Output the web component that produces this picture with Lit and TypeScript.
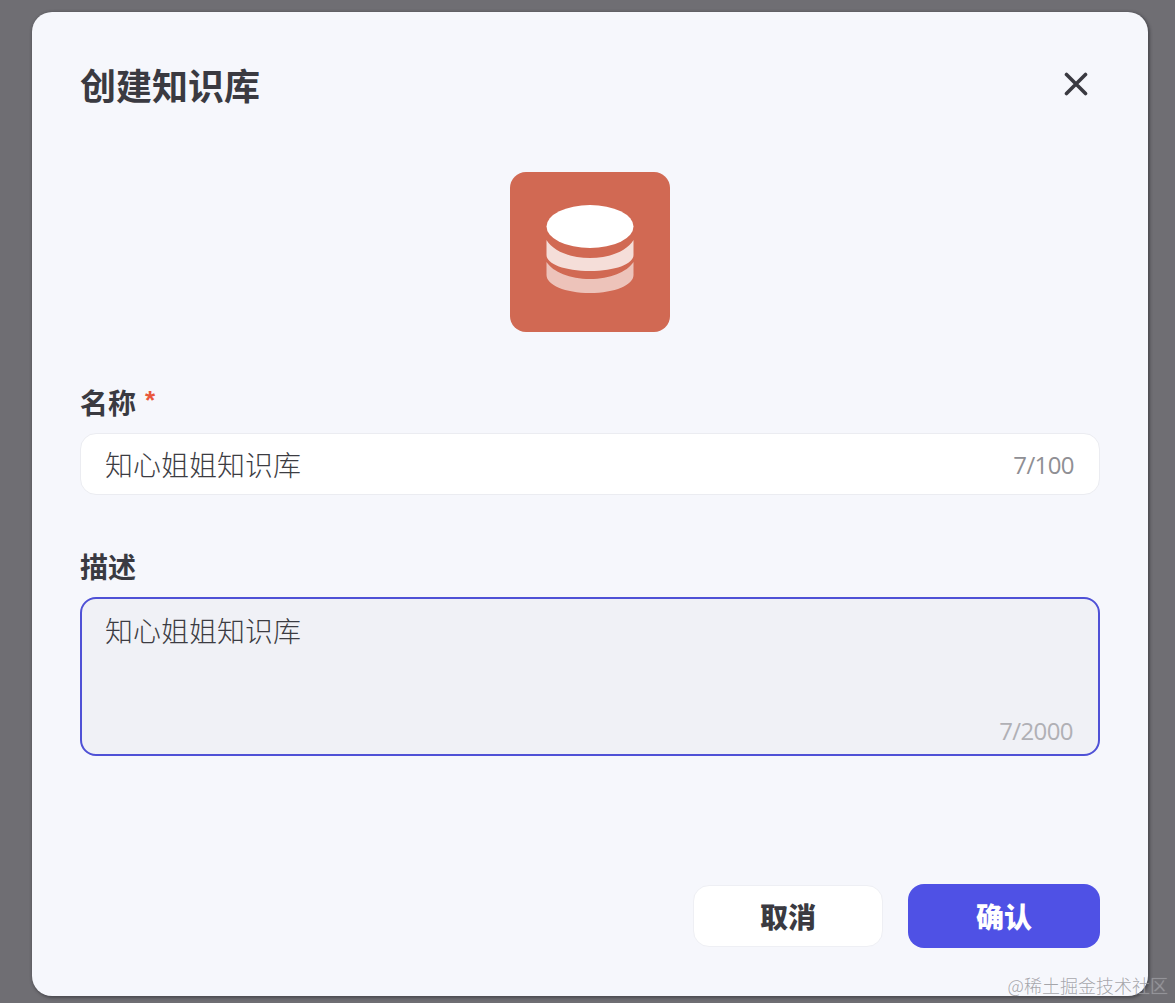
import { LitElement, html, css } from "lit";
import { customElement } from "lit/decorators.js";

@customElement("app-root")
export class AppRoot extends LitElement {
  static styles = css`
    :host {
      display: block;
      width: 1175px;
      height: 1003px;
      position: relative;
      overflow: hidden;
      background: #6f6e73;
      font-family: "Noto Sans CJK SC", "Noto Sans", sans-serif;
      color: #3a3a41;
    }
    .wrap {
      box-sizing: border-box;
      height: 1003px;
      padding: 12px 27px 7px 32px;
      display: flex;
    }
    .card {
      box-sizing: border-box;
      flex: 1;
      height: 984px;
      background: #f6f7fc;
      border-radius: 20px;
      box-shadow: 1px 1px 3px 1px rgba(40, 40, 45, 0.5);
      padding: 0 48px 48px;
      display: flex;
      flex-direction: column;
    }
    .head {
      height: 150px;
      padding-top: 47px;
      box-sizing: border-box;
      display: flex;
      justify-content: space-between;
      align-items: flex-start;
    }
    h1 {
      margin: 0;
      font-size: 36px;
      line-height: 50px;
      font-weight: 700;
      white-space: nowrap;
    }
    .close {
      display: block;
      margin: 13px 12px 0 0;
    }
    .logo-row {
      display: flex;
      justify-content: center;
      margin-top: 10px;
    }
    .logo {
      width: 160px;
      height: 160px;
      border-radius: 16px;
      background: #d16953;
      display: block;
    }
    .label {
      font-size: 28px;
      line-height: 40px;
      font-weight: 700;
      height: 40px;
      display: flex;
      gap: 9px;
    }
    .star {
      color: #e9573c;
      font-family: "Liberation Sans", sans-serif;
      font-weight: 700;
      font-size: 26px;
      line-height: 36px;
    }
    .name-label {
      margin-top: 50px;
      margin-bottom: 11px;
    }
    .desc-label {
      margin-top: 51px;
      margin-bottom: 11px;
    }
    .input {
      box-sizing: border-box;
      height: 62px;
      background: #fff;
      border: 1px solid #ebecf1;
      border-radius: 16px;
      padding: 0 25px 0 24px;
      display: flex;
      align-items: center;
      justify-content: space-between;
      font-size: 28px;
      font-weight: 300;
      color: #3c3c42;
    }
    .count {
      font-family: "Open Sans", "Noto Sans", sans-serif;
      font-size: 24px;
      font-weight: 400;
      letter-spacing: -0.6px;
      color: #8f8f94;
    }
    .area {
      box-sizing: border-box;
      height: 159px;
      background: #f0f1f6;
      border: 2px solid #4f51d6;
      border-radius: 16px;
      padding: 8px 25px 5px 23px;
      display: flex;
      flex-direction: column;
      justify-content: space-between;
      font-size: 28px;
      font-weight: 300;
      line-height: 46px;
      color: #3c3c42;
    }
    .area .count {
      align-self: flex-end;
      color: #b0b0b5;
      line-height: 36px;
    }
    .foot {
      margin-top: auto;
      display: flex;
      justify-content: flex-end;
      align-items: center;
      gap: 25px;
    }
    .btn {
      box-sizing: border-box;
      border-radius: 16px;
      font-size: 28px;
      font-weight: 900;
      display: flex;
      align-items: center;
      justify-content: center;
    }
    .cancel {
      width: 190px;
      height: 62px;
      background: #fff;
      border: 1px solid #eeeff4;
      color: #3a3a41;
    }
    .ok {
      width: 192px;
      height: 64px;
      background: #4f51e5;
      color: #fff;
    }
    .mark {
      position: absolute;
      right: 7px;
      bottom: 5px;
      font-family: "Noto Sans CJK SC", serif;
      font-size: 18px;
      font-weight: 300;
      line-height: 26px;
      color: rgba(150, 150, 155, 0.85);
      text-shadow: 0 0 1px rgba(255, 255, 255, 0.35);
      white-space: nowrap;
    }
  `;

  render() {
    return html`
      <div class="wrap">
        <div class="card">
          <div class="head">
            <h1>创建知识库</h1>
            <svg class="close" width="24" height="24" viewBox="0 0 24 24" fill="none">
              <path d="M2.5 2.5L21.5 21.5M21.5 2.5L2.5 21.5" stroke="#3a3a41" stroke-width="3.6" stroke-linecap="round" />
            </svg>
          </div>
          <div class="logo-row">
            <svg class="logo" viewBox="0 0 160 160">
              <path d="M36.5 68C43 79 60 86 80 86S117 79 123.500 68V83C123.500 92 105 99 80 99S36.500 92 36.500 83Z" fill="#fff" fill-opacity=".78" />
              <path d="M36.500 90C43 100 60 107 80 107S117 100 123.500 90V103C123.500 113 105 121 80 121S36.500 113 36.500 103Z" fill="#fff" fill-opacity=".6" />
              <ellipse cx="80" cy="54.500" rx="43.500" ry="21.500" fill="#fff" />
            </svg>
          </div>
          <div class="label name-label">名称<span class="star">*</span></div>
          <div class="input"><span>知心姐姐知识库</span><span class="count">7/100</span></div>
          <div class="label desc-label">描述</div>
          <div class="area"><span>知心姐姐知识库</span><span class="count">7/2000</span></div>
          <div class="foot">
            <div class="btn cancel">取消</div>
            <div class="btn ok">确认</div>
          </div>
        </div>
      </div>
      <div class="mark">@稀土掘金技术社区</div>
    `;
  }
}
